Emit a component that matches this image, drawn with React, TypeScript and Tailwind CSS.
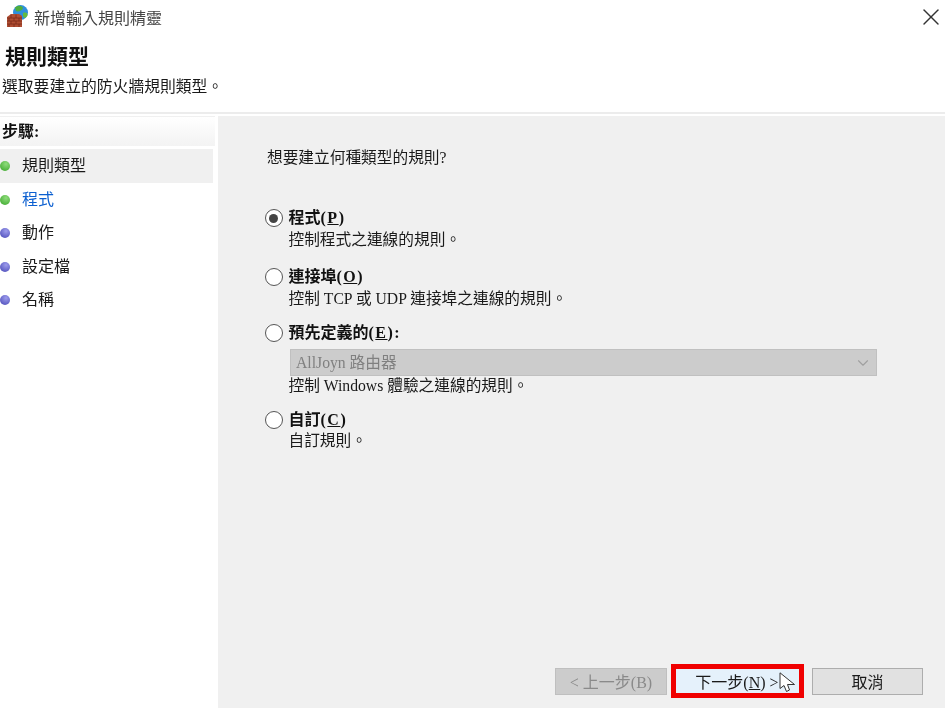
import { X, ChevronDown } from 'lucide-react'

const STEPS = [
  { label: '規則類型', done: true, active: true },
  { label: '程式', done: true, current: true },
  { label: '動作' },
  { label: '設定檔' },
  { label: '名稱' },
]

function WizardIcon() {
  return (
    <svg width="23" height="23" viewBox="0 0 23 23" className="shrink-0 -mt-[4px]">
      <circle cx="14.5" cy="7.5" r="7.5" fill="#2f8fdc" />
      <path d="M9 2.5 C12 0 16 0.5 17 3 C16 6 12 7 10 6 Z" fill="#4fae3c" />
      <path d="M17 8 C20 7 22 8 21.5 10.5 C20 13.5 17.5 13.5 17 11 Z" fill="#63bb3f" />
      <path d="M1 22 L1 12 L5 9 L13 9 L16 11 L16 22 Z" fill="#b04e33" />
      <path d="M1 13 H16 M1 16 H16 M1 19 H16 M5 9.5 V13 M10 9.5 V13 M3 13 V16 M8 13 V16 M13 13 V16 M5 16 V19 M10 16 V19 M3 19 V22 M8 19 V22 M13 19 V22" stroke="#7c2c1b" strokeWidth="0.8" fill="none" />
    </svg>
  )
}

function StepDot({ done }: { done?: boolean }) {
  return (
    <span className={`w-[10px] h-[10px] rounded-full ${done ? 'bg-[radial-gradient(circle_at_60%_30%,#8fdc7c,#36a326)]' : 'bg-[radial-gradient(circle_at_60%_30%,#9d9cec,#4444b4)]'}`} />
  )
}

function Radio({ checked }: { checked?: boolean }) {
  return (
    <span className="w-[18px] h-[18px] rounded-full border-[1.5px] border-[#555] bg-white flex items-center justify-center shrink-0">
      {checked && <span className="w-[9px] h-[9px] rounded-full bg-[#444]" />}
    </span>
  )
}

function Option({ checked, name, hotkey, suffix, children }: { checked?: boolean; name: string; hotkey: string; suffix?: string; children?: React.ReactNode }) {
  return (
    <div className="flex flex-col">
      <div className="flex items-center gap-[6px] h-[20px]">
        <Radio checked={checked} />
        <span className="text-[16px] font-bold text-[#111] leading-[20px]">
          {name}
          <span className="tracking-[1.5px]">(<span className="underline">{hotkey}</span>){suffix}</span>
        </span>
      </div>
      <div className="pl-[24px]">{children}</div>
    </div>
  )
}

export default function App() {
  return (
    <div className="w-[945px] h-[708px] overflow-hidden bg-white flex flex-col text-[#1a1a1a] font-['Liberation_Serif','Noto_Sans_CJK_TC',serif] blur-[0.6px]">
      <div className="h-[37px] flex items-center pl-[6px] gap-[5px] shrink-0">
        <WizardIcon />
        <span className="text-[16px] text-[#444]">新增輸入規則精靈</span>
        <X className="ml-auto w-[28px] h-[28px] text-[#333] -mt-[4px]" strokeWidth={1.2} />
      </div>
      <div className="h-[77px] pl-[5px] border-b-2 border-[#ececec] shrink-0">
        <h1 className="text-[21px] font-bold text-[#111] leading-[28px] mt-[6px]">規則類型</h1>
        <p className="text-[15.8px] leading-[20px] -ml-[3px] mt-[6px]">選取要建立的防火牆規則類型。</p>
      </div>
      <div className="flex flex-1 min-h-0 pt-[2px]">
        <aside className="w-[216px] shrink-0 pr-[1px]">
          <div className="h-[30px] pl-[2px] flex items-center text-[16px] font-bold text-[#111] bg-gradient-to-b from-white to-[#f3f3f3] border-t border-[#f0f0f0]">步驟:</div>
          <ul className="mt-[3px] flex flex-col">
            {STEPS.map((s) => (
              <li key={s.label} className={`flex items-center gap-[12px] text-[16px] ${s.active ? 'bg-[#f0f0f0] h-[34px] mr-[2px]' : 'h-[33.5px]'} ${s.current ? 'text-[#0b5fd0]' : ''}`}>
                <StepDot done={s.done} />
                <span>{s.label}</span>
              </li>
            ))}
          </ul>
        </aside>
        <main className="ml-[2px] flex-1 bg-[#f0f0f0] flex flex-col">
          <div className="pl-[49px] pt-[32px] flex-1">
            <p className="text-[15.7px] leading-[20px]">想要建立何種類型的規則?</p>
            <div className="mt-[40px] -ml-[2.5px] flex flex-col w-[612.5px]">
              <Option checked name="程式" hotkey="P">
                <p className="text-[15.7px] leading-[20px] mt-[2px]">控制程式之連線的規則。</p>
              </Option>
              <div className="mt-[17px]">
                <Option name="連接埠" hotkey="O">
                  <p className="text-[15.7px] leading-[20px] mt-[2px]">控制 TCP 或 UDP 連接埠之連線的規則。</p>
                </Option>
              </div>
              <div className="mt-[14px]">
                <Option name="預先定義的" hotkey="E" suffix=":">
                  <div className="mt-[6px] ml-[1.5px] h-[27px] bg-[#cccccc] border border-[#c0c0c0] flex items-center pl-[5px] pr-[4px] text-[15.7px] text-[#808080]">
                    <span>AllJoyn 路由器</span>
                    <ChevronDown className="ml-auto w-[18px] h-[18px] text-[#a0a0a0]" strokeWidth={1.5} />
                  </div>
                  <p className="text-[15.7px] leading-[20px]">控制 Windows 體驗之連線的規則。</p>
                </Option>
              </div>
              <div className="mt-[14px]">
                <Option name="自訂" hotkey="C">
                  <p className="text-[15.7px] leading-[20px] mt-[1px]">自訂規則。</p>
                </Option>
              </div>
            </div>
          </div>
          <div className="h-[48px] shrink-0 flex items-start pl-[337px] text-[16px]">
            <button className="mt-[8px] w-[112px] h-[27px] pt-[2px] bg-[#cccccc] border border-[#bfbfbf] text-[#8a8a8a]">&lt; 上一步(B)</button>
            <div className="ml-[4px] w-[133px] h-[34px] mt-[4px] border-[5px] border-[#f00000] bg-[#e5f1fb] flex items-center justify-center relative">
              <span className="-ml-[1px] pt-[3px]">下一步(<span className="underline">N</span>) &gt;</span>
              <svg className="absolute right-[3px] top-[3px]" width="17" height="21" viewBox="0 0 17 21">
                <path d="M1 0.8 L1 16.5 L5 13.5 L7.5 19.5 L10.5 18 L8.5 12.5 L15.5 12.5 Z" fill="#fff" stroke="#333" strokeWidth="1" />
              </svg>
            </div>
            <button className="ml-[8px] mt-[8px] w-[111px] h-[27px] pt-[2px] bg-[#e1e1e1] border border-[#adadad]">取消</button>
          </div>
        </main>
      </div>
    </div>
  )
}
